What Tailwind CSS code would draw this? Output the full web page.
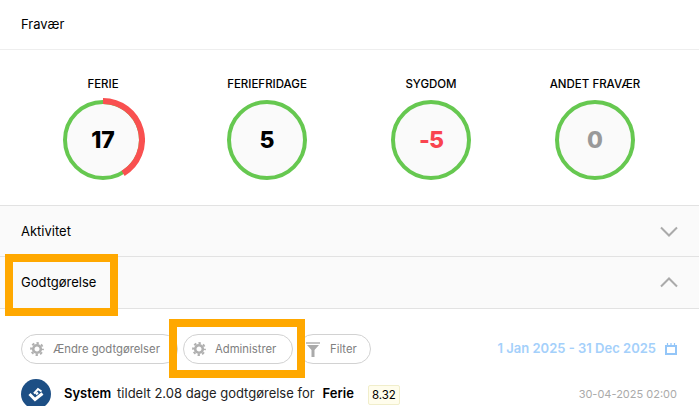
<!DOCTYPE html>
<html lang="da">
<head>
<meta charset="utf-8">
<title>Fravær</title>
<script src="https://cdn.jsdelivr.net/npm/@tailwindcss/browser@4"></script>
</head>
<body class="bg-white">
<div class="relative h-[406px] w-[699px] overflow-hidden bg-white font-['Inter','Liberation_Sans',sans-serif] text-black">

  <div class="flex h-[50px] items-center border-b border-[#eeeeee] px-[21px] text-[13px]">Fravær</div>

  <div class="grid h-[155px] grid-cols-[repeat(4,164px)] pl-[21px] pt-[27px]">
    <div class="flex flex-col items-center">
      <div class="h-[15px] text-[11.5px] font-medium leading-[15px]">FERIE</div>
      <div class="relative mt-[6px] h-[84px] w-[84px]">
        <svg width="84" height="84" viewBox="-42 -42 84 84" class="absolute inset-0"><circle r="38" fill="#fafafa" stroke="#66c850" stroke-width="4"/><path d="M0 -39A39 39 0 0 1 20.100 33.400" fill="none" stroke="#f95050" stroke-width="6"/></svg>
        <div class="absolute inset-0 flex items-center justify-center text-[23px] font-extrabold">17</div>
      </div>
    </div>
    <div class="flex flex-col items-center">
      <div class="h-[15px] text-[11.5px] font-medium leading-[15px]">FERIEFRIDAGE</div>
      <div class="relative mt-[6px] h-[84px] w-[84px]">
        <svg width="84" height="84" viewBox="-42 -42 84 84" class="absolute inset-0"><circle r="38" fill="#fafafa" stroke="#66c850" stroke-width="4"/></svg>
        <div class="absolute inset-0 flex items-center justify-center text-[23px] font-extrabold">5</div>
      </div>
    </div>
    <div class="flex flex-col items-center">
      <div class="h-[15px] text-[11.5px] font-medium leading-[15px]">SYGDOM</div>
      <div class="relative mt-[6px] h-[84px] w-[84px]">
        <svg width="84" height="84" viewBox="-42 -42 84 84" class="absolute inset-0"><circle r="38" fill="#fafafa" stroke="#66c850" stroke-width="4"/></svg>
        <div class="absolute inset-0 flex items-center justify-center text-[23px] font-extrabold tracking-[-1px] text-[#f9444f]">-5</div>
      </div>
    </div>
    <div class="flex flex-col items-center">
      <div class="h-[15px] text-[11.5px] font-medium leading-[15px]">ANDET FRAVÆR</div>
      <div class="relative mt-[6px] h-[84px] w-[84px]">
        <svg width="84" height="84" viewBox="-42 -42 84 84" class="absolute inset-0"><circle r="38" fill="#fafafa" stroke="#66c850" stroke-width="4"/></svg>
        <div class="absolute inset-0 flex items-center justify-center text-[23px] font-extrabold text-[#999999]">0</div>
      </div>
    </div>
  </div>

  <div class="flex h-[52px] items-center justify-between border-y border-[#e2e2e2] bg-[#fafafa] px-[21px] text-[13px]">
    <span class="pt-px">Aktivitet</span>
    <svg width="18" height="11" viewBox="0 0 18 11" fill="none" stroke="#aaaaaa" stroke-width="2"><path d="M1 1.500l8 8 8-8"/></svg>
  </div>
  <div class="flex h-[52px] items-center justify-between border-b border-[#e2e2e2] bg-[#fafafa] px-[21px] text-[13px]">
    <span>Godtgørelse</span>
    <svg width="18" height="11" viewBox="0 0 18 11" fill="none" stroke="#aaaaaa" stroke-width="2"><path d="M1 9.500l8-8 8 8"/></svg>
  </div>

  <div class="flex h-[70px] items-start justify-between pl-[21px] pr-[22px] pt-[25px]">
    <div class="flex gap-[5px] text-[11.3px] text-[#808080]">
      <div class="flex h-[30px] w-[157px] items-center gap-[9px] rounded-full border border-[#d2d2d2] pl-[8px]">
        <svg width="14" height="14" viewBox="-7 -7 14 14" fill="none" stroke="#b0b0b0"><circle r="3.800" stroke-width="2.600"/><circle r="5.900" stroke-width="2" stroke-dasharray="2.400 2.233" stroke-dashoffset="1.200"/></svg>
        <span>Ændre godtgørelser</span>
      </div>
      <div class="flex h-[30px] w-[110px] items-center gap-[9px] rounded-full border border-[#d2d2d2] pl-[8px]">
        <svg width="14" height="14" viewBox="-7 -7 14 14" fill="none" stroke="#b0b0b0"><circle r="3.800" stroke-width="2.600"/><circle r="5.900" stroke-width="2" stroke-dasharray="2.400 2.233" stroke-dashoffset="1.200"/></svg>
        <span>Administrer</span>
      </div>
      <div class="flex h-[30px] w-[73px] items-center gap-[10px] rounded-full border border-[#d2d2d2] pl-[7px]">
        <svg width="14" height="15" viewBox="0 0 14 15" fill="#aaaaaa"><path d="M0 0h14v2H0z" fill="#c4c4c4"/><path d="M1 3h12L8.500 8v7h-3V8z"/></svg>
        <span>Filter</span>
      </div>
    </div>
    <div class="flex h-[30px] items-center gap-[9px] text-[13px] font-semibold text-[#a4d0fb]">
      <span>1 Jan 2025 - 31 Dec 2025</span>
      <svg width="12" height="12" viewBox="0 0 12 12" fill="none" stroke="#94c6f8"><path d="M1 3h10v8H1z" stroke-width="2"/><path d="M2.500 0v3M6 0v3M9.500 0v3" stroke-width="1.200"/></svg>
    </div>
  </div>

  <div class="flex items-start justify-between pl-[21px] pr-[22px] text-[13px]">
    <div class="flex items-start">
      <svg width="30" height="30" viewBox="0 0 30 30"><circle cx="15" cy="15" r="15" fill="#1d4f85"/><path d="M8.500 15l5.500 5.500 7.500-6" fill="none" stroke="#fff" stroke-width="3"/><path d="M13 14.500l4-4.500 3.500 2.500M15 15.500l2-2" fill="none" stroke="#fff" stroke-width="2"/></svg>
      <div class="ml-[13px] mt-[6px] flex leading-[17px]">
        <span class="font-semibold">System</span>
        <span class="ml-[6px] text-[#222222]">tildelt 2.08 dage godtgørelse for</span>
        <span class="ml-[8px] font-semibold">Ferie</span>
        <span class="ml-[14px] flex h-[20px] items-center rounded-[2px] border border-[#f1eecb] bg-[#fffdec] px-[3px] text-[11.5px]">8.32</span>
      </div>
    </div>
    <div class="mt-[7px] text-[11px] text-[#aaaaaa]">30-04-2025 02:00</div>
  </div>

  <div class="absolute left-[5px] top-[254px] h-[62px] w-[113px] border-[8px] border-[#ffa800]"></div>
  <div class="absolute left-[169px] top-[319px] h-[59px] w-[136px] border-[8px] border-[#ffa800]"></div>
</div>
</body>
</html>
